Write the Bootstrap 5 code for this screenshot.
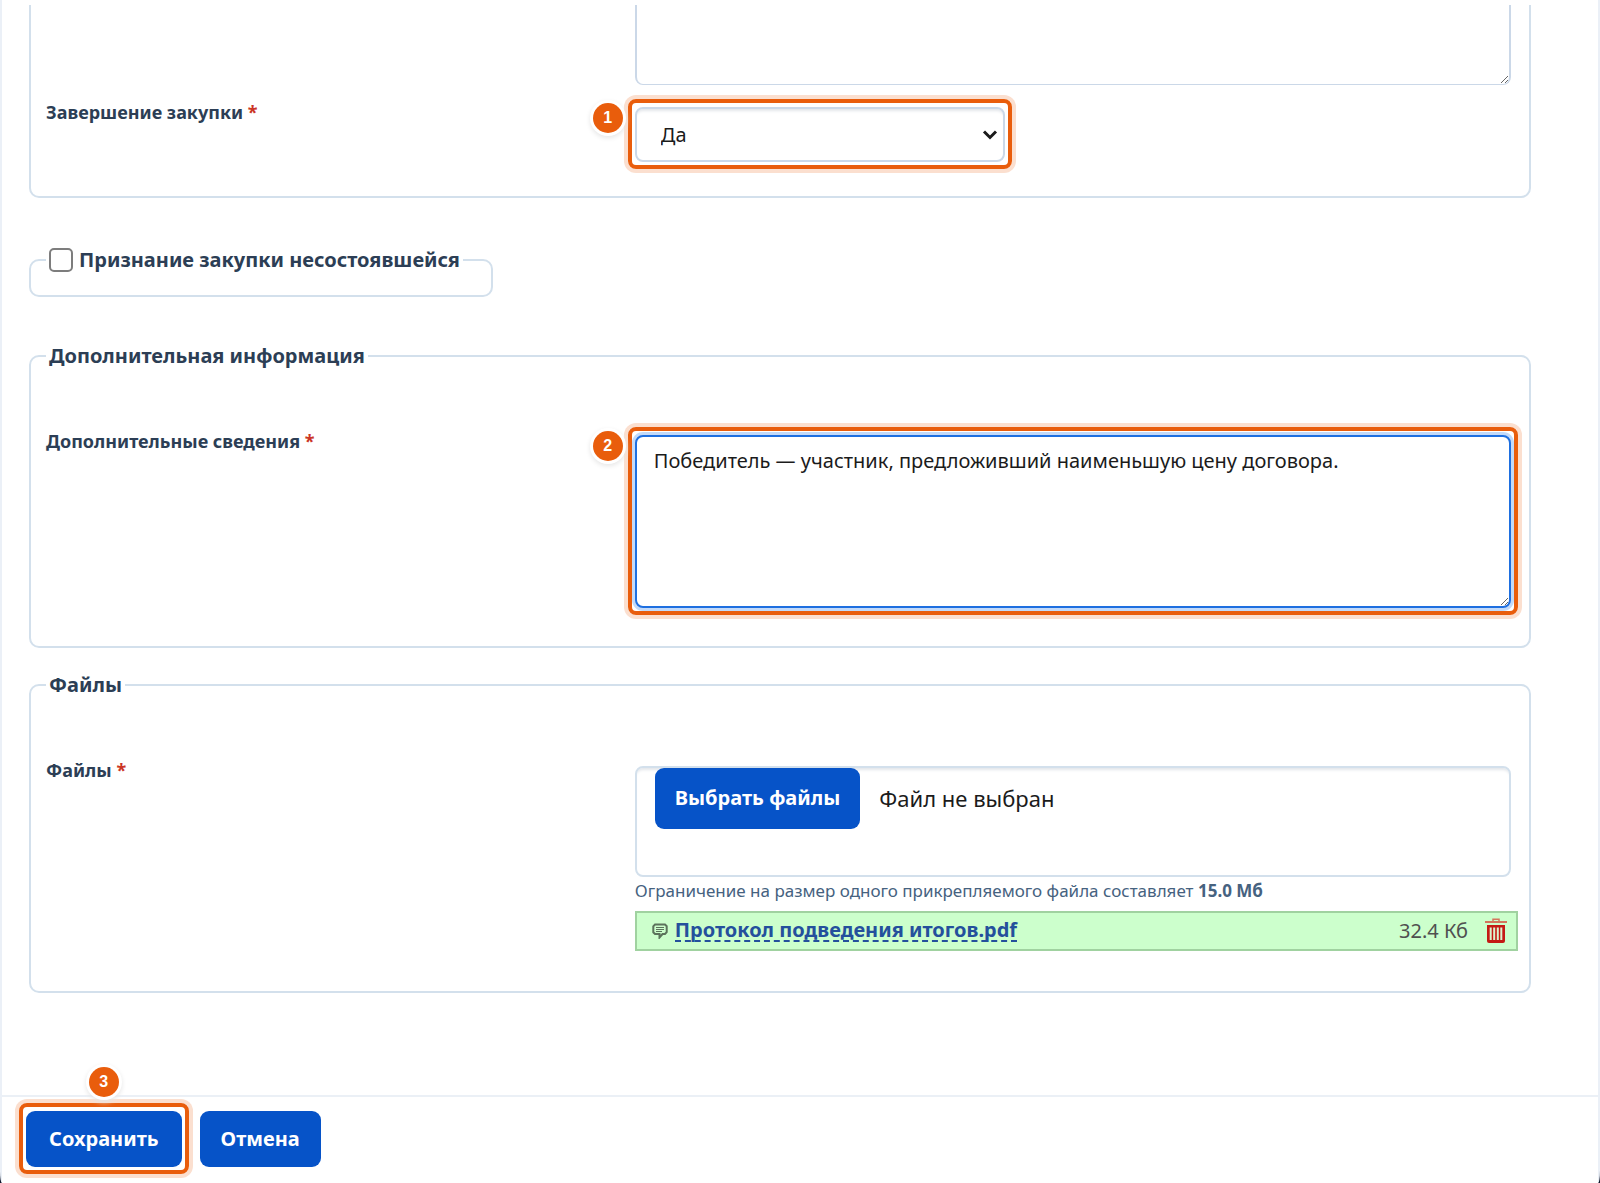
<!DOCTYPE html>
<html lang="ru">
<head>
<meta charset="utf-8">
<meta name="viewport" content="width=device-width, initial-scale=1">
<title>Подведение итогов</title>
<link href="https://cdn.jsdelivr.net/npm/bootstrap@5.3.0/dist/css/bootstrap.min.css" rel="stylesheet">
<style>
  :root { --line: #d3e0ec; --ink: #2c3e55; --blue: #0653c8; --accent: #e95d0c; }
  body { font-family: "Noto Sans", "Open Sans", sans-serif; font-size: 20px; line-height: 28px; color: #1b1b1b; background: #10182c; }
  .sheet { min-height: 100vh; background: #fff; border: solid #ebf0f7; border-width: 0 2px; border-radius: 0 0 2px 2px / 0 0 12px 12px; padding-top: 5px; }
  .form-area { padding: 0 67px 102px 27px; }
  .group { border: 2px solid var(--line); border-radius: 10px; padding: 0 11px 0 15px; }
  .group-cut { border-top: 0; border-radius: 0 0 10px 10px; padding-bottom: 34px; }
  .group-legend { float: none; width: auto; margin: 0; padding: 0 3px; font-size: 20px; line-height: 28px; font-weight: 700; color: var(--ink); }
  .col-name { width: 40%; }
  .col-value { width: 60%; }
  .name { font-size: 18px; line-height: 24px; font-weight: 700; color: var(--ink); }
  .req { color: #cb3526; }
  .field, .field:focus { font-size: 20px; line-height: 28px; color: #1b1b1b; border: 1px solid #cbd8e8; border-radius: 8px; box-shadow: none; }
  .inner { margin-right: 7px; }
  .lines { padding-top: 57px; }
  .lines .col-value { padding-top: 8px; }
  .finish { padding-top: 13px; }
  .finish .col-value { padding-top: 9px; }
  textarea.field { display: block; padding: 10px 17px; border-width: 1px 2px; }
  textarea.field-cut { height: 80px; border-top: 0; border-radius: 0 0 8px 8px; }
  textarea.field-active, textarea.field-active:focus { height: 173px; border: 2px solid #1e6fe0; box-shadow: 0 0 0 3px #c3daf9; }
  select.field { width: 370px; height: 55px; padding: 0 24px; box-shadow: inset 0 4px 3px -2px #e3e6ea; border-width: 2px;
    background-position: right 5px center; background-size: 16px 12px;
    background-image: url("data:image/svg+xml,%3Csvg xmlns='http://www.w3.org/2000/svg' viewBox='0 0 16 12'%3E%3Cpath fill='none' stroke='%231b1b1b' stroke-width='3' d='M2 2.5l6 6 6-6'/%3E%3C/svg%3E"); }
  .step-frame { position: relative; width: fit-content; }
  .step-frame.wide { width: auto; }
  .step-frame::after { content: ""; position: absolute; inset: -8px -7px -7px; border: 4px solid var(--accent); border-radius: 8px; box-shadow: 0 0 0 4px #fbdfcf; pointer-events: none; }
  .step-no { position: absolute; z-index: 2; left: -42px; top: -4px; width: 30px; height: 30px; border-radius: 50%; background: var(--accent); color: #fff; font: 700 16px/29px "Liberation Sans", Arial, sans-serif; text-align: center; box-shadow: 0 0 0 3px #fff, 0 2px 5px 3px #e6e6e6; }
  .step-no.above { left: 50%; top: -44px; margin-left: -15px; }
  .failed { width: 464px; height: 51px; margin-top: 48px; }
  .extra { height: 306px; margin-top: 45px; }
  .files { height: 322px; margin-top: 23px; }
  .files .col-value { padding-top: 10px; }
  .tick { width: 24px; height: 24px; margin: 0 6px 0 0; border: 2px solid #7d7d7d; border-radius: 4px; flex: none; }
  .solid-btn { background: var(--blue); color: #fff; border: 0; border-radius: 9px; font-size: 20px; line-height: 28px; font-weight: 700; padding: 14px 21px; }
  .solid-btn:hover { background: #0547ad; color: #fff; }
  .solid-btn.main-btn { padding: 14px 23px; }
  .drop { height: 111px; border: 2px solid var(--line); border-radius: 8px; padding: 0 18px; box-shadow: inset 0 4px 3px -2px #e3e6ea; }
  .solid-btn.pick { padding: 16px 20px 17px; }
  .picked { margin: 16px 0 0 19px; font-size: 22px; line-height: 28px; }
  .hint { font-size: 17px; line-height: 24px; color: #46627f; padding: 2px 0 8px; }
  .file-row { background: #ccffcc; border: 2px solid #a0d2a0; height: 40px; padding: 0 9px 0 15px; }
  .note { margin-right: 7px; }
  .file-link { color: #24509c; font-weight: 700; line-height: 20px; text-decoration: none; border-bottom: 2px dashed #24509c; }
  .file-size { color: #505050; }
  .trash { margin-left: 17px; }
  .actions { border-top: 2px solid #ebf0f6; padding: 14px 24px 12px; gap: 18px; }
</style>
<script src="https://cdn.jsdelivr.net/npm/bootstrap@5.3.0/dist/js/bootstrap.bundle.min.js"></script>
</head>
<body>
<form class="sheet">
  <div class="form-area">
    <fieldset class="group group-cut">
      <div class="d-flex">
        <div class="col-name"></div>
        <div class="col-value"><div class="inner"><textarea class="form-control field field-cut" aria-label="Обоснование"></textarea></div></div>
      </div>
      <div class="d-flex finish">
        <div class="col-name"><label class="name" for="finish">Завершение закупки <span class="req">*</span></label></div>
        <div class="col-value">
          <div class="step-frame">
            <span class="step-no">1</span>
            <select class="form-select field" id="finish"><option>Да</option><option>Нет</option></select>
          </div>
        </div>
      </div>
    </fieldset>

    <fieldset class="group failed">
      <legend class="group-legend d-flex align-items-center">
        <input class="form-check-input tick" type="checkbox" id="failed">
        <label for="failed">Признание закупки несостоявшейся</label>
      </legend>
    </fieldset>

    <fieldset class="group extra">
      <legend class="group-legend">Дополнительная информация</legend>
      <div class="d-flex lines">
        <div class="col-name"><label class="name" for="info">Дополнительные сведения <span class="req">*</span></label></div>
        <div class="col-value">
          <div class="step-frame wide inner">
            <span class="step-no">2</span>
            <textarea class="form-control field field-active" id="info">Победитель — участник, предложивший наименьшую цену договора.</textarea>
          </div>
        </div>
      </div>
    </fieldset>

    <fieldset class="group files">
      <legend class="group-legend">Файлы</legend>
      <div class="d-flex lines">
        <div class="col-name"><label class="name" for="files">Файлы <span class="req">*</span></label></div>
        <div class="col-value">
          <div class="inner drop d-flex align-items-start">
            <input class="visually-hidden" type="file" id="files" multiple>
            <label class="btn solid-btn pick" for="files">Выбрать файлы</label>
            <span class="picked">Файл не выбран</span>
          </div>
          <div class="hint">Ограничение на размер одного прикрепляемого файла составляет <b>15.0 Мб</b></div>
          <div class="file-row d-flex align-items-center">
            <svg class="note" width="16" height="16" viewBox="0 0 16 16" fill="none" stroke="#5b735b" stroke-width="2" aria-hidden="true"><path d="M3 1.500h10l1.700 1.700v6L13 11h-2.500l-3 3.500V11H3L1.300 9.300v-6z"/><path d="M4 4.500h8M4 6.500h8M4 8.500h6" stroke-width="1.200"/></svg>
            <a class="file-link" href="#">Протокол подведения итогов.pdf</a>
            <span class="file-size ms-auto">32.4 Кб</span>
            <button type="button" class="btn p-0 border-0 trash d-flex" aria-label="Удалить"><svg width="22" height="26" viewBox="0 0 22 26" fill="none"><path d="M8 3.500V1.200h6v2.300" stroke="#d4755c" stroke-width="1.500"/><path d="M0 4h22" stroke="#d4755c" stroke-width="2"/><path d="M2 7h18v16q0 2-2 2H4q-2 0-2-2z" fill="#c41a14"/><path d="M5.700 9.500v12.500M9.200 9.500v12.500M12.800 9.500v12.500M16.300 9.500v12.500" stroke="#dcf5cf" stroke-width="2"/></svg></button>
          </div>
        </div>
      </div>
    </fieldset>
  </div>
  <div class="actions d-flex">
    <div class="step-frame">
      <span class="step-no above">3</span>
      <button type="submit" class="btn solid-btn main-btn">Сохранить</button>
    </div>
    <button type="button" class="btn solid-btn">Отмена</button>
  </div>
</form>
</body>
</html>
